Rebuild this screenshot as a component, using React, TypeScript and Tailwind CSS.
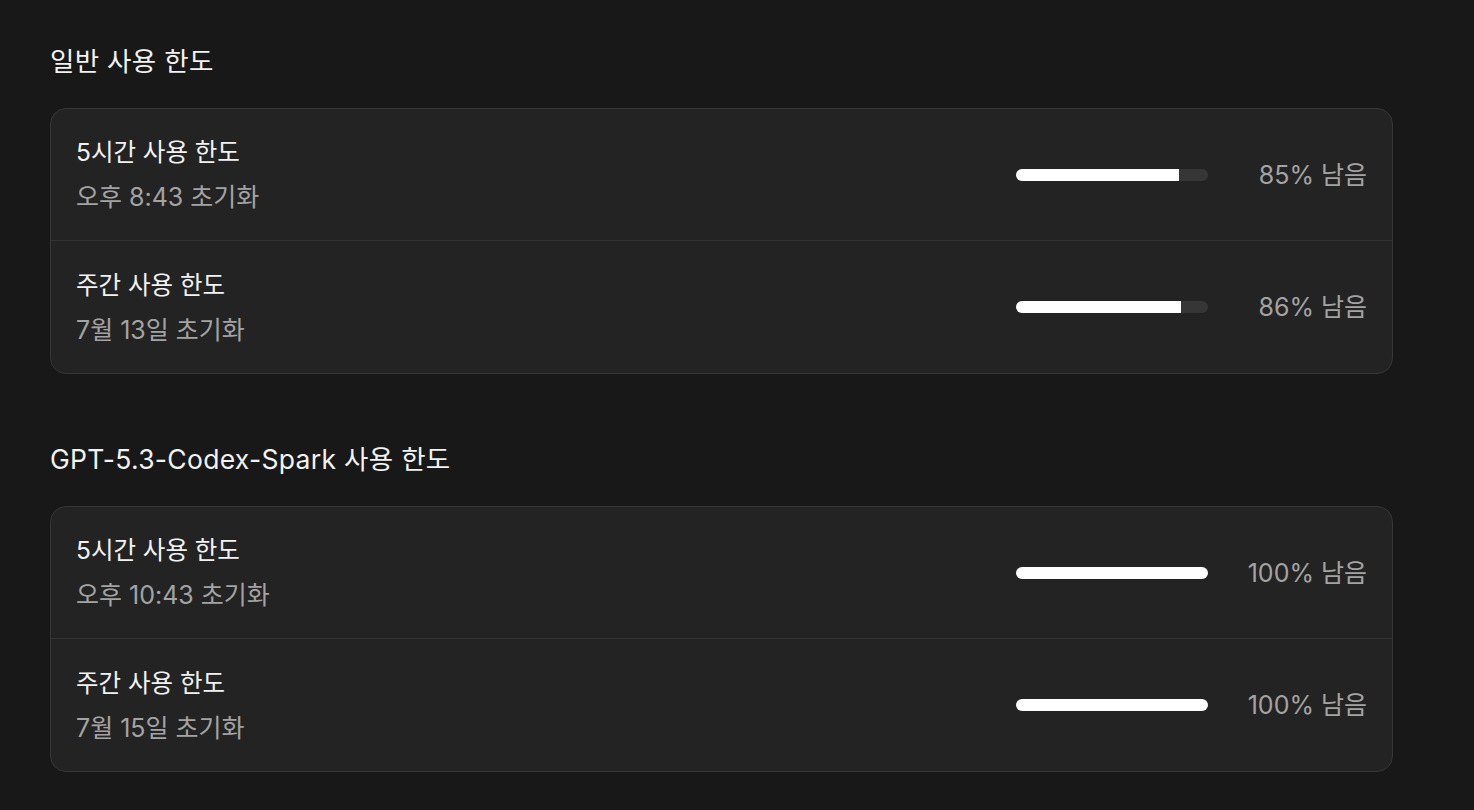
import React from "react";

type Limit = { title: string; reset: string; remaining: number };

const sections: { heading: string; items: Limit[] }[] = [
  {
    heading: "일반 사용 한도",
    items: [
      { title: "5시간 사용 한도", reset: "오후 8:43 초기화", remaining: 85 },
      { title: "주간 사용 한도", reset: "7월 13일 초기화", remaining: 86 },
    ],
  },
  {
    heading: "GPT-5.3-Codex-Spark 사용 한도",
    items: [
      { title: "5시간 사용 한도", reset: "오후 10:43 초기화", remaining: 100 },
      { title: "주간 사용 한도", reset: "7월 15일 초기화", remaining: 100 },
    ],
  },
];

function Row({ item, last }: { item: Limit; last: boolean }) {
  return (
    <div
      className={
        "flex h-[132px] items-center justify-between pl-[25px] pr-[25px] " +
        (last ? "" : "border-b border-[#323232]")
      }
    >
      <div className="flex flex-col gap-[13px]">
        <div className="text-[24.5px] leading-[32px] text-[#f2f2f2]">{item.title}</div>
        <div className="text-[25px] leading-[32px] text-[#a3a3a3]">{item.reset}</div>
      </div>
      <div className="flex items-center">
        <div className="h-[12px] w-[192px] overflow-hidden rounded-full bg-[#363636]">
          <div className="h-full bg-white" style={{ width: `${item.remaining}%` }} />
        </div>
        <div className="w-[159px] text-right text-[25px] leading-[32px] text-[#a3a3a3]">
          {item.remaining}% 남음
        </div>
      </div>
    </div>
  );
}

export default function App() {
  return (
    <div
      className="min-h-screen bg-[#181818] px-[50px] pt-[45px] pb-[40px]"
      style={{ fontFamily: 'Inter, "Noto Sans CJK KR", sans-serif' }}
    >
      <div className="flex w-[1343px] flex-col gap-[69px]">
        {sections.map((s) => (
          <section key={s.heading} className="flex flex-col gap-[31px]">
            <h2 className="text-[26.5px] leading-[32px] font-normal tracking-[0.3px] text-[#f2f2f2]">
              {s.heading}
            </h2>
            <div className="overflow-hidden rounded-[16px] border border-[#363636] bg-[#232323]">
              {s.items.map((it, i) => (
                <Row key={i} item={it} last={i === s.items.length - 1} />
              ))}
            </div>
          </section>
        ))}
      </div>
    </div>
  );
}
